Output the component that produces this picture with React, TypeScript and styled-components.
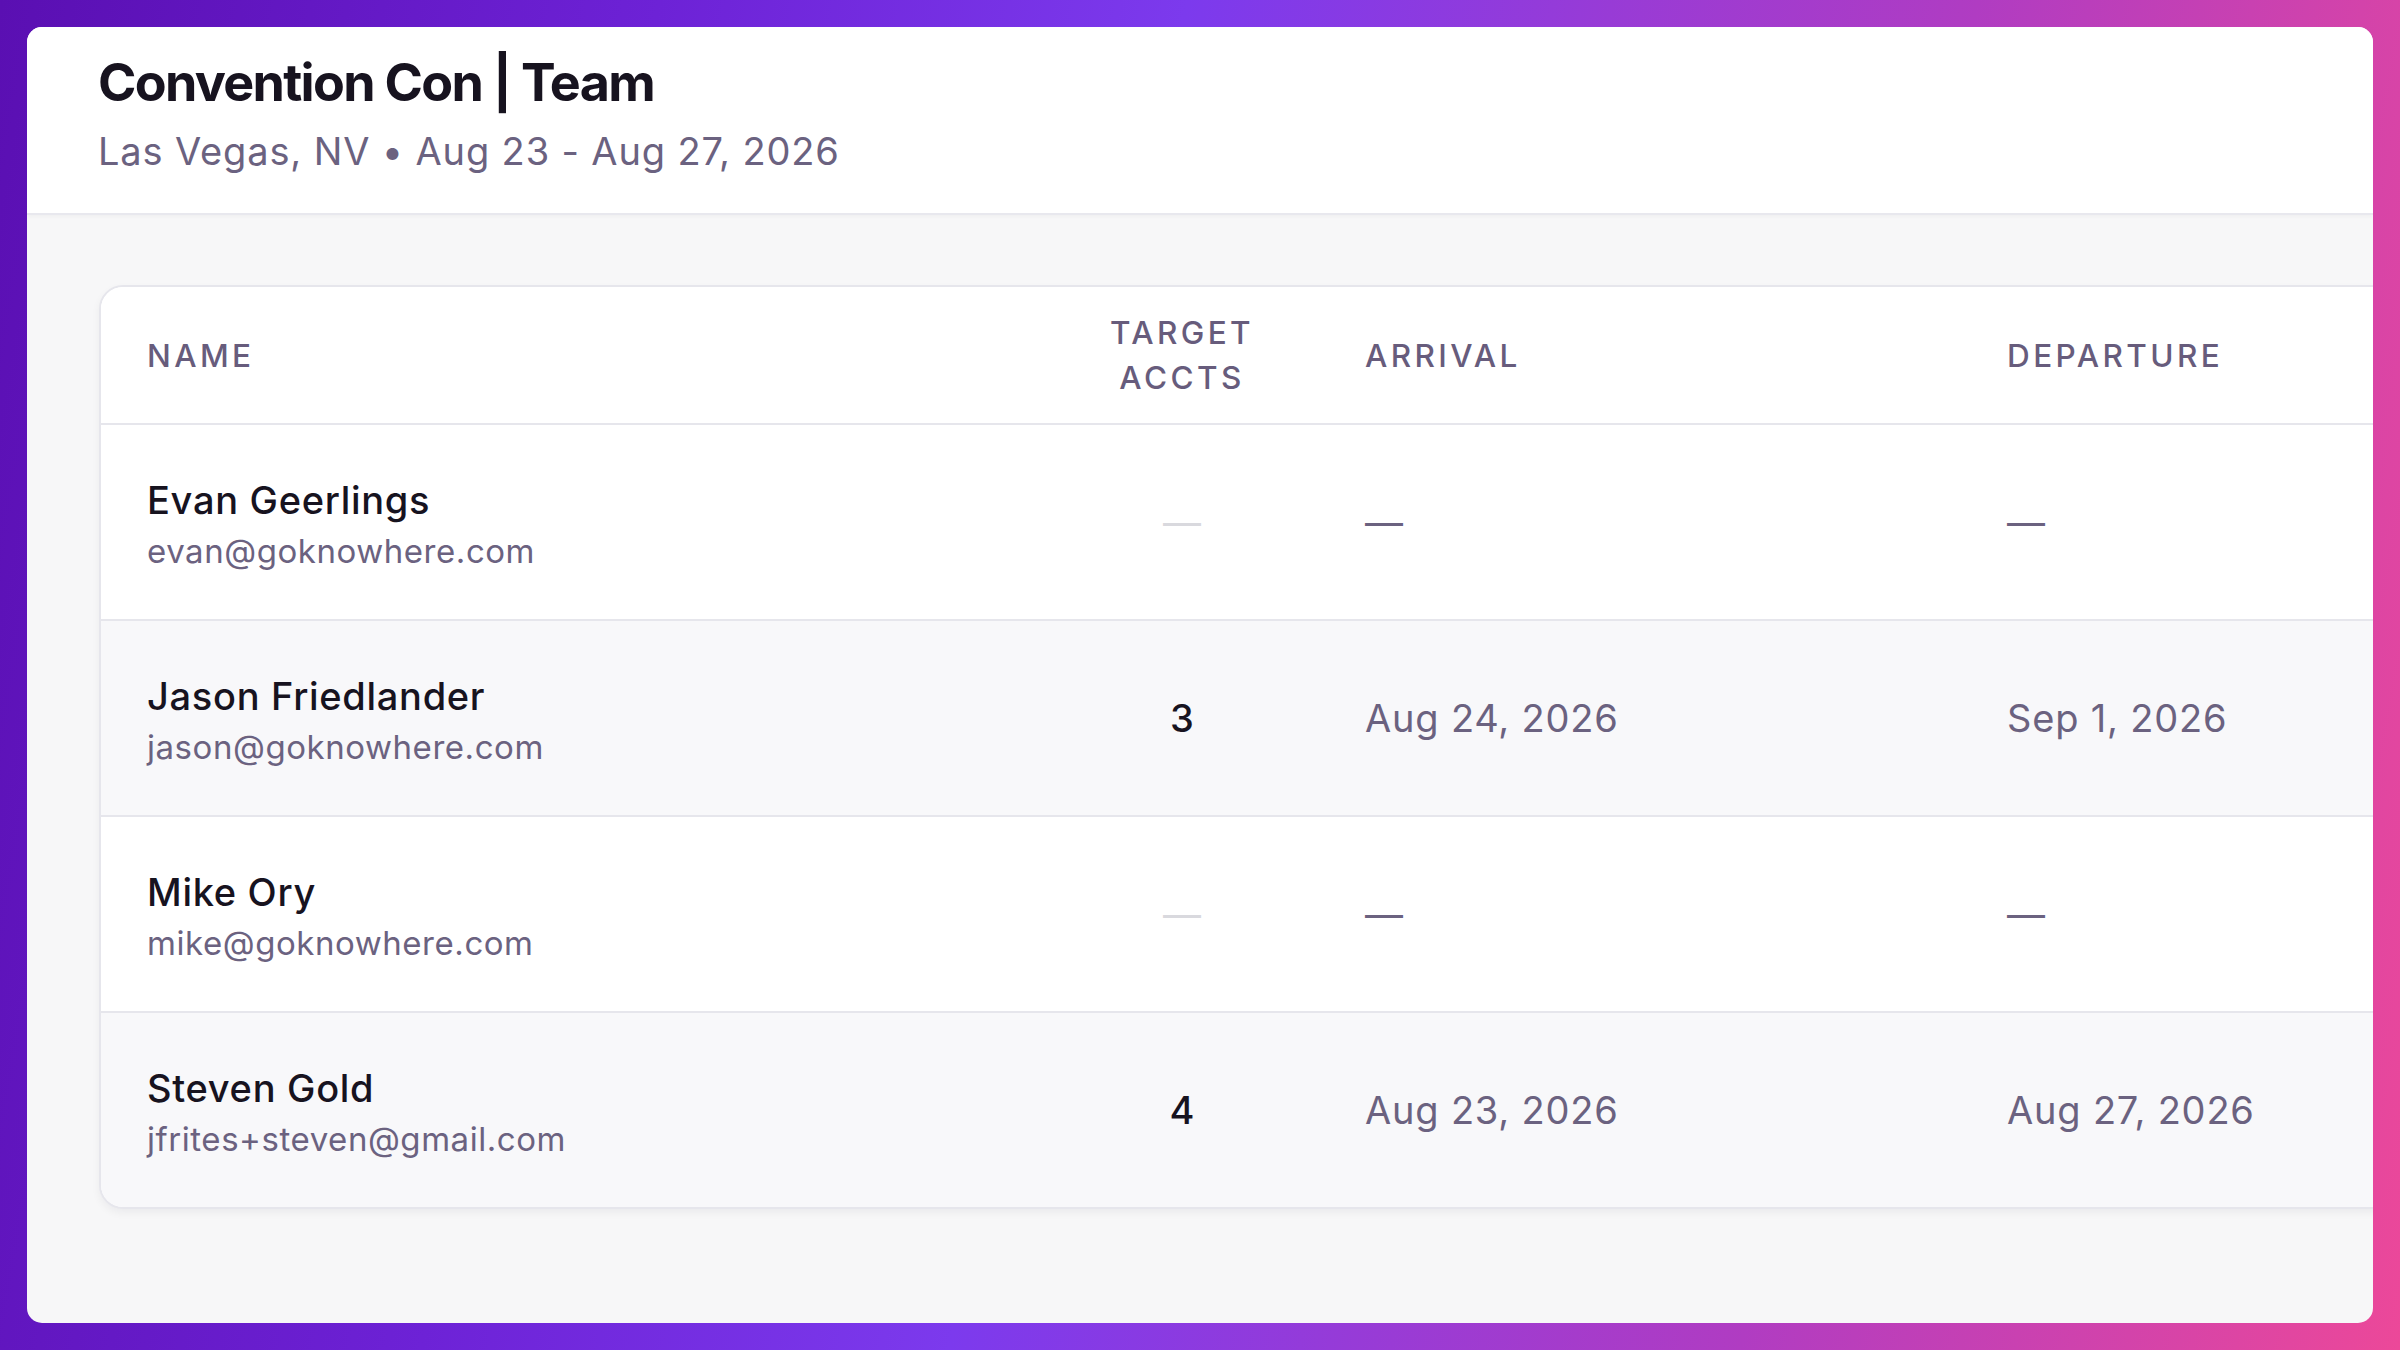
import React from "react";
import styled, { createGlobalStyle } from "styled-components";

const GlobalStyle = createGlobalStyle`
  html, body { margin: 0; padding: 0; }
  body {
    font-family: Inter, "Noto Sans", "Liberation Sans", sans-serif;
    -webkit-font-smoothing: antialiased;
  }
  * { box-sizing: border-box; }
`;

const Backdrop = styled.div`
  width: 2400px;
  height: 1350px;
  padding: 27px;
  background: linear-gradient(100deg, #5a0fb2 0%, #6d22d6 25%, #7c3aed 45%, #b03cc2 75%, #ec4899 100%);
`;

const Window = styled.div`
  width: 100%;
  height: 100%;
  background: #f7f7f8;
  border-radius: 15px;
  overflow: hidden;
  display: flex;
  flex-direction: column;
`;

const Header = styled.header`
  background: #ffffff;
  padding: 24px 71px 41px;
  border-bottom: 2px solid #e8e8ee;
  box-shadow: 0 2px 4px rgba(20, 10, 40, 0.03);
  display: flex;
  flex-direction: column;
  gap: 15px;
`;

const Title = styled.h1`
  margin: 0;
  font-size: 52px;
  line-height: 64px;
  font-weight: 700;
  color: #17131f;
  letter-spacing: -1.7px;
`;

const Subtitle = styled.div`
  font-size: 38px;
  line-height: 42px;
  font-weight: 400;
  letter-spacing: 0.85px;
  color: #6b6280;
`;

const Content = styled.main`
  flex: 1;
  padding: 70px 0 0 72px;
`;

const Card = styled.div`
  width: 2480px;
  background: #ffffff;
  border: 2px solid #e6e6ec;
  border-radius: 24px;
  overflow: hidden;
  box-shadow: 0 4px 8px rgba(20, 10, 40, 0.05);
`;

const Row = styled.div<{ $shade?: boolean; $head?: boolean }>`
  display: grid;
  grid-template-columns: 946px 270px 642px 620px;
  align-items: center;
  height: ${(p) => (p.$head ? "136px" : "196px")};
  background: ${(p) => (p.$shade ? "#f8f8fa" : "#ffffff")};
  border-top: ${(p) => (p.$head ? "none" : "2px solid #e6e6ec")};
`;

const Cell = styled.div<{ $center?: boolean }>`
  padding: 0 48px;
  text-align: ${(p) => (p.$center ? "center" : "left")};
  &:first-child {
    padding-left: 46px;
  }
`;

const PersonCell = styled(Cell)`
  padding-top: 6px;
`;

const HeadCell = styled(Cell)`
  font-size: 31.5px;
  line-height: 45px;
  font-weight: 500;
  letter-spacing: 3.4px;
  text-transform: uppercase;
  color: #675c7c;
`;

const PersonName = styled.div`
  font-size: 38px;
  line-height: 50px;
  font-weight: 500;
  letter-spacing: 0.7px;
  color: #17131f;
`;

const Email = styled.div`
  margin-top: 1px;
  font-size: 33px;
  line-height: 50px;
  font-weight: 400;
  letter-spacing: 0.55px;
  color: #6b6280;
`;

const Count = styled.span`
  font-size: 38px;
  font-weight: 500;
  color: #17131f;
`;

const DateText = styled.span`
  font-size: 38px;
  font-weight: 400;
  letter-spacing: 0.8px;
  color: #6b6280;
`;

const Dash = styled.span<{ $light?: boolean }>`
  font-size: 38px;
  font-weight: 400;
  color: ${(p) => (p.$light ? "#d9d9de" : "#6b6280")};
`;

type Member = {
  name: string;
  email: string;
  target?: number;
  arrival?: string;
  departure?: string;
};

const members: Member[] = [
  { name: "Evan Geerlings", email: "evan@goknowhere.com" },
  {
    name: "Jason Friedlander",
    email: "jason@goknowhere.com",
    target: 3,
    arrival: "Aug 24, 2026",
    departure: "Sep 1, 2026",
  },
  { name: "Mike Ory", email: "mike@goknowhere.com" },
  {
    name: "Steven Gold",
    email: "jfrites+steven@gmail.com",
    target: 4,
    arrival: "Aug 23, 2026",
    departure: "Aug 27, 2026",
  },
];

export default function App() {
  return (
    <>
      <GlobalStyle />
      <Backdrop>
        <Window>
          <Header>
            <Title>Convention Con | Team</Title>
            <Subtitle>Las Vegas, NV • Aug 23 - Aug 27, 2026</Subtitle>
          </Header>
          <Content>
            <Card>
              <Row $head>
                <HeadCell>Name</HeadCell>
                <HeadCell $center>
                  Target
                  <br />
                  Accts
                </HeadCell>
                <HeadCell>Arrival</HeadCell>
                <HeadCell>Departure</HeadCell>
              </Row>
              {members.map((m, i) => (
                <Row key={m.email} $shade={i % 2 === 1}>
                  <PersonCell>
                    <PersonName>{m.name}</PersonName>
                    <Email>{m.email}</Email>
                  </PersonCell>
                  <Cell $center>
                    {m.target !== undefined ? <Count>{m.target}</Count> : <Dash $light>—</Dash>}
                  </Cell>
                  <Cell>{m.arrival ? <DateText>{m.arrival}</DateText> : <Dash>—</Dash>}</Cell>
                  <Cell>{m.departure ? <DateText>{m.departure}</DateText> : <Dash>—</Dash>}</Cell>
                </Row>
              ))}
            </Card>
          </Content>
        </Window>
      </Backdrop>
    </>
  );
}
